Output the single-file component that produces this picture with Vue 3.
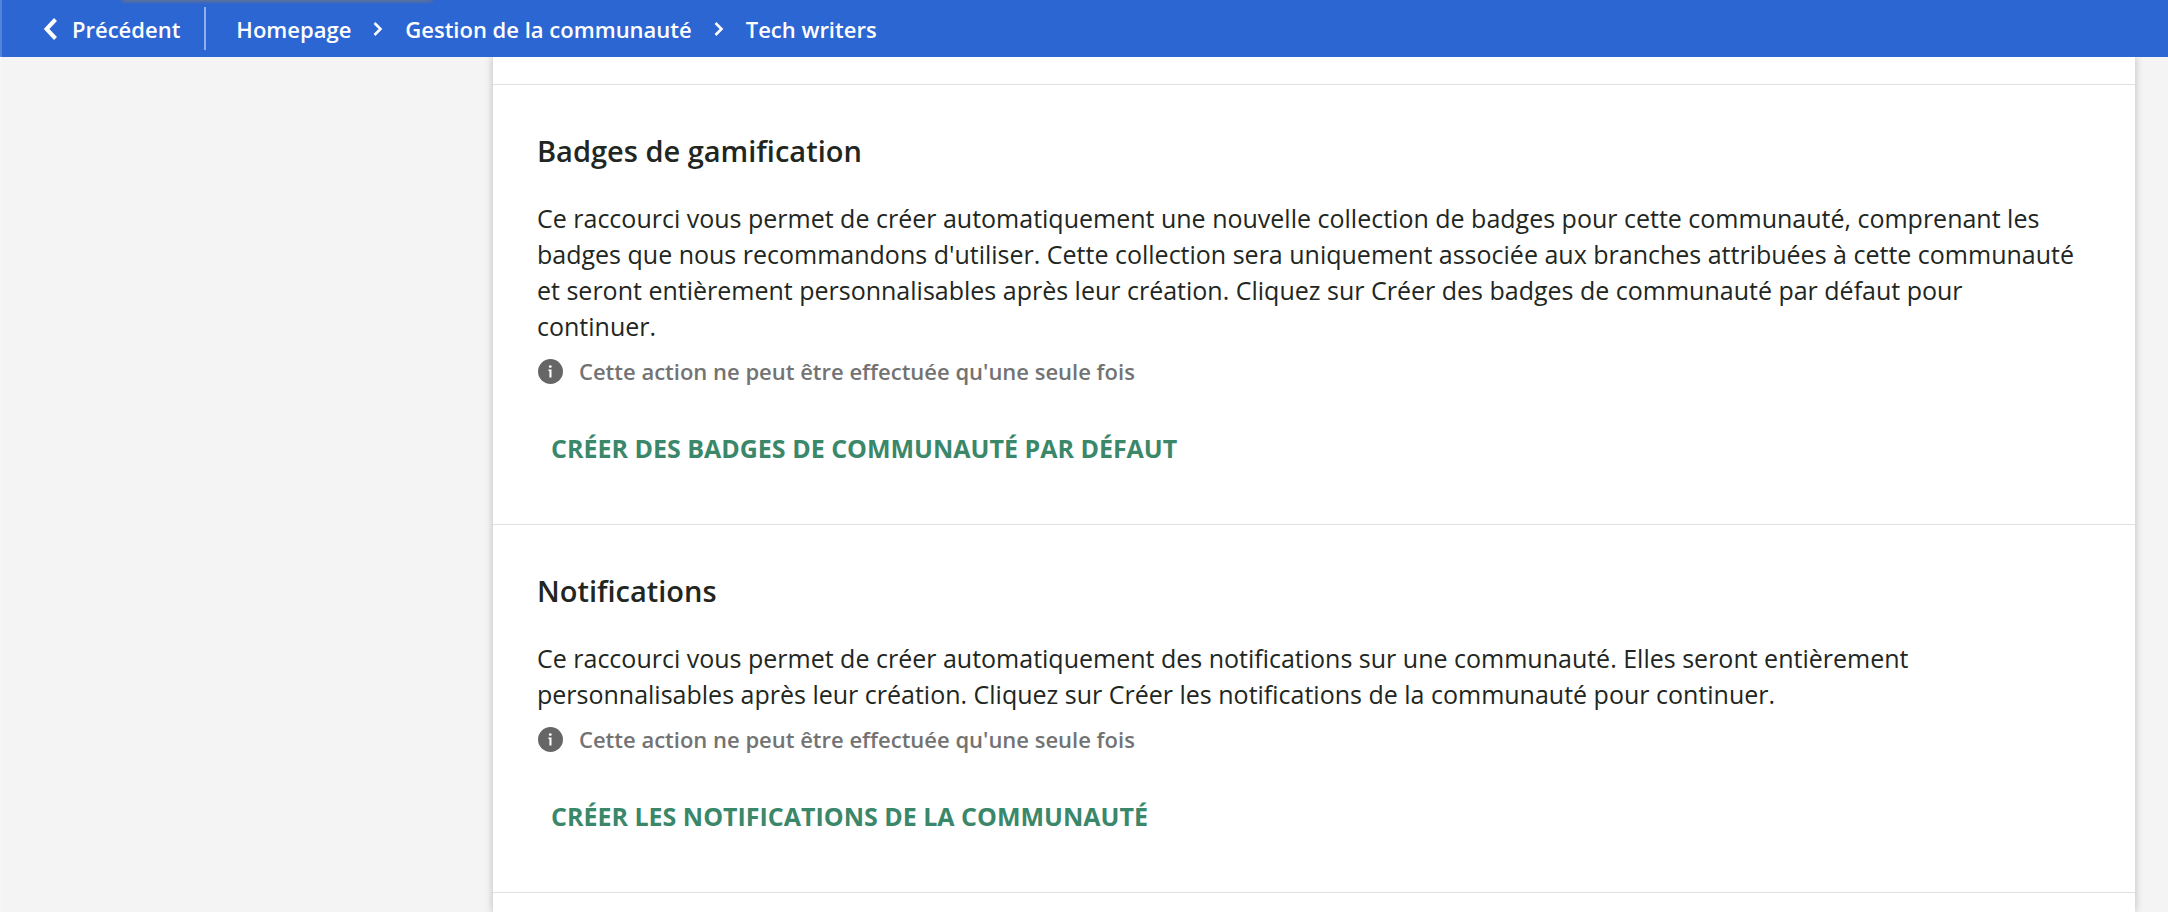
<script setup>
import { ref } from 'vue'

const crumbs = ['Homepage', 'Gestion de la communauté', 'Tech writers']

const sections = ref([
  {
    id: 'badges',
    title: 'Badges de gamification',
    text: "Ce raccourci vous permet de créer automatiquement une nouvelle collection de badges pour cette communauté, comprenant les badges que nous recommandons d'utiliser. Cette collection sera uniquement associée aux branches attribuées à cette communauté et seront entièrement personnalisables après leur création. Cliquez sur Créer des badges de communauté par défaut pour continuer.",
    action: 'Créer des badges de communauté par défaut'
  },
  {
    id: 'notifications',
    title: 'Notifications',
    text: 'Ce raccourci vous permet de créer automatiquement des notifications sur une communauté. Elles seront entièrement personnalisables après leur création. Cliquez sur Créer les notifications de la communauté pour continuer.',
    action: 'Créer les notifications de la communauté'
  }
])
</script>

<template>
  <div class="page">
    <header class="topbar">
      <a href="#" class="back">
        <svg class="back-icon" viewBox="0 0 13 22" aria-hidden="true">
          <path d="M11.5 1.5 L2.5 11 L11.5 20.5" />
        </svg>
        <span>Précédent</span>
      </a>
      <nav class="crumbs">
        <template v-for="(crumb, i) in crumbs" :key="crumb">
          <svg v-if="i > 0" class="crumb-icon" viewBox="0 0 10 14" aria-hidden="true">
            <path d="M1.5 1 L7.5 7 L1.5 13" />
          </svg>
          <a href="#">{{ crumb }}</a>
        </template>
      </nav>
    </header>

    <main class="content">
      <div class="card">
        <div class="previous"></div>
        <section v-for="section in sections" :key="section.id" class="section">
          <h2>{{ section.title }}</h2>
          <p class="text">{{ section.text }}</p>
          <p class="info">
            <svg class="info-icon" viewBox="0 0 26 26" aria-hidden="true">
              <circle cx="13.5" cy="13.5" r="12.5" fill="#666" />
              <circle cx="13.3" cy="8.6" r="1.4" fill="#fff" />
              <path d="M11.4 11.5 H14.5 V19.5 H12.4 V13 H11.4 Z" fill="#fff" />
            </svg>
            <span>Cette action ne peut être effectuée qu'une seule fois</span>
          </p>
          <button type="button" class="action">{{ section.action }}</button>
        </section>
      </div>
    </main>
  </div>
</template>

<style>
body {
  margin: 0;
  background: #f4f4f4;
}
</style>

<style scoped>
.page {
  display: flex;
  flex-direction: column;
  height: 100vh;
  overflow: hidden;
  position: relative;
  font-family: "Open Sans", "Noto Sans", sans-serif;
  color: #222621;
}

/* light line along the window edge */
.page::before {
  content: "";
  position: absolute;
  z-index: 2;
  top: 0;
  left: 0;
  width: 2px;
  height: 100%;
  background: rgba(255, 255, 255, 0.2);
}

.topbar {
  position: relative;
  z-index: 1;
  flex: none;
  display: flex;
  align-items: center;
  height: 57px;
  padding-left: 44px;
  overflow: hidden;
  background: #2c66d3;
  font-size: 22px;
  line-height: 30px;
  font-weight: 600;
}

/* shadow of the tab above the bar */
.topbar::before {
  content: "";
  position: absolute;
  top: -4px;
  left: 123px;
  width: 308px;
  height: 4px;
  box-shadow: 0 0 4px 1px #777;
}

.topbar a {
  color: #fff;
  text-decoration: none;
}

.back {
  display: flex;
  align-items: center;
  gap: 15px;
  height: 43px;
  padding-right: 24px;
  border-right: 2px solid #91afe8;
}

.back-icon {
  width: 13px;
  height: 22px;
}

.back-icon path {
  fill: none;
  stroke: #fff;
  stroke-width: 4;
}

.crumbs {
  display: flex;
  align-items: center;
  gap: 22px;
  padding-left: 30px;
}

.crumb-icon {
  width: 10px;
  height: 14px;
}

.crumb-icon path {
  fill: none;
  stroke: #fff;
  stroke-width: 2.6;
}

.content {
  flex: 1;
  padding: 0 33px 0 493px;
}

.card {
  height: 100%;
  background: #fff;
  box-shadow: 0 0 8px rgba(0, 0, 0, 0.24);
}

.previous {
  height: 27px;
  border-bottom: 1px solid #e0e0e0;
}

.section {
  padding: 46px 52px 58px 44px;
  border-bottom: 1px solid #e0e0e0;
}

h2 {
  margin: 0 0 29px;
  font-size: 29px;
  line-height: 40px;
  font-weight: 600;
}

.text {
  margin: 0 0 12px;
  font-size: 25px;
  line-height: 36px;
}

.info {
  display: flex;
  align-items: center;
  gap: 16px;
  margin: 0 0 44px;
  font-size: 22px;
  line-height: 30px;
  font-weight: 600;
  color: #737373;
}

.info-icon {
  width: 26px;
  height: 26px;
}

.action {
  display: block;
  padding: 0 14px;
  border: 0;
  background: none;
  font-family: inherit;
  font-size: 25px;
  line-height: 36px;
  font-weight: 700;
  text-transform: uppercase;
  color: #3a876a;
  cursor: pointer;
}
</style>
